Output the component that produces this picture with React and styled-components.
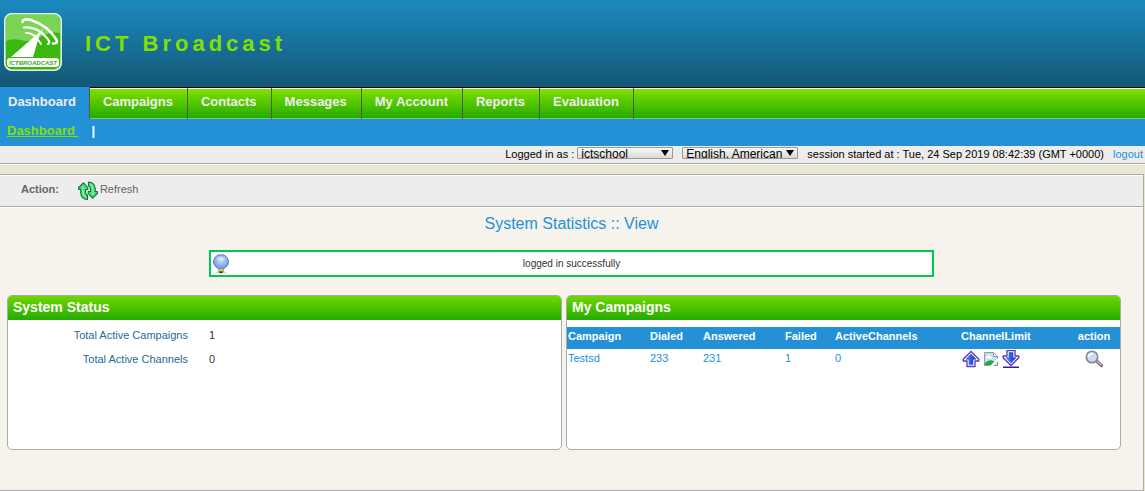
import { useState } from 'react';
import styled, { createGlobalStyle } from 'styled-components';

const GlobalStyle = createGlobalStyle`
  * {
    box-sizing: border-box;
  }

  html, body, #root {
    height: 100%;
  }

  body {
    margin: 0;
    background: #e8e8d0;
    color: #000;
    font-family: 'Liberation Sans', Arial, sans-serif;
    font-size: 11px;
  }
`;

const Page = styled.div`
  display: flex;
  flex-direction: column;
  min-height: 100%;
`;

const Header = styled.header`
  display: flex;
  align-items: center;
  gap: 22px;
  height: 87px;
  padding: 0 0 4px 3px;
  background: linear-gradient(#1c8abf, #145775);

  h1 {
    margin: 0;
    padding-top: 4px;
    color: #80e000;
    font-size: 22px;
    letter-spacing: 4px;
  }
`;

const Nav = styled.nav`
  display: flex;
  height: 32px;
  border-top: 1px solid #000;
  border-bottom: 1px solid #7fcf66;
  background: linear-gradient(#fff 1px, #80e000 1px, #24ab00);
`;

const Tab = styled.a`
  margin: ${({ $active }) => ($active ? '-1px 0' : '0 0 -1px')};
  padding: ${({ $active }) => ($active ? '7px 13px 0 8px' : '6px 14px 0 13px')};
  border-right: 1px solid #555;
  background: ${({ $active }) => ($active ? '#2491d6' : 'none')};
  color: #eee;
  font-size: 13px;
  font-weight: bold;
  line-height: 15px;
  text-decoration: none;
`;

const SubNav = styled.div`
  display: flex;
  gap: 13px;
  height: 27px;
  padding: 4px 7px;
  background: #2491d6;
  color: #fff;
  font-size: 13px;
  font-weight: bold;
  line-height: 15px;

  a {
    color: #80e000;
    white-space: pre;
  }
`;

const SessionBar = styled.div`
  display: flex;
  justify-content: flex-end;
  gap: 9px;
  height: 18px;
  padding: 1px 2px 0 0;
  border-bottom: 1px solid #aaa;
  background: #ededed;
  box-shadow: 0 1px #fff;
  line-height: 14px;

  label {
    display: flex;
    gap: 3px;
  }
`;

const SelectBox = styled.span`
  display: grid;
  width: ${({ $width }) => $width}px;
  height: 12px;

  select,
  &::after {
    grid-area: 1 / 1;
  }

  select {
    appearance: none;
    width: 100%;
    height: 12px;
    margin: 0;
    padding: 0 3px;
    border: 1px solid #999;
    border-radius: 1px;
    background: linear-gradient(#f8f8f8, #dadada);
    color: #000;
    font-family: inherit;
    font-size: 12px;
    line-height: 12px;
  }

  &::after {
    content: '';
    justify-self: end;
    margin: 3px 4px 0 0;
    border: solid transparent;
    border-width: 6px 4px 0;
    border-top-color: #000;
    height: 0;
    pointer-events: none;
    z-index: 1;
  }
`;

const Logout = styled.a`
  color: #2491d6;
  text-decoration: none;
`;

const Main = styled.main`
  flex: 1;
  margin: 10px 1px 0 0;
  border: solid #aaa;
  border-width: 1px 1px 1px 0;
  background: #f6f3ec;
`;

const ActionBar = styled.div`
  display: flex;
  align-items: center;
  gap: 19px;
  height: 32px;
  padding-left: 21px;
  border-top: 1px solid #fff;
  border-bottom: 1px solid #aaa;
  background: #ededed;
  color: #666;
  line-height: 13px;

  strong {
    padding-bottom: 4px;
  }
`;

const ActionButton = styled.button`
  display: flex;
  align-items: center;
  gap: 2px;
  padding: 0;
  border: 0;
  background: none;
  color: #666;
  font: inherit;
  cursor: pointer;

  span {
    padding-bottom: 4px;
  }
`;

const PageTitle = styled.h2`
  margin: 0;
  padding-top: 6px;
  border-top: 1px solid #fff;
  color: #2491d6;
  font-size: 16px;
  font-weight: normal;
  line-height: 20px;
  text-align: center;
`;

const Notice = styled.p`
  display: grid;
  grid-template-columns: 18px 1fr 18px;
  align-items: center;
  width: 725px;
  max-width: 100%;
  height: 27px;
  margin: 16px auto 18px;
  border: 2px solid #00c853;
  background: #fff;
  color: #333;
  font-size: 10px;
  text-align: center;
`;

const Panels = styled.div`
  display: grid;
  grid-template-columns: 1fr 1fr;
  gap: 4px;
  padding: 0 22px 40px 7px;
`;

const StyledPanel = styled.section`
  min-height: 155px;
  overflow: hidden;
  border: 1px solid #aaa;
  border-radius: 5px;
  background: #fff;

  h3 {
    height: 24px;
    margin: 0 0 7px;
    padding: 3px 5px;
    background: linear-gradient(#70d800, #24ab00);
    color: #fff;
    font-size: 14px;
    line-height: 16px;
  }
`;

const StatusList = styled.dl`
  display: grid;
  grid-template-columns: 180px 1fr;
  column-gap: 21px;
  margin: 0;
  line-height: 16px;
  grid-auto-rows: 24px;

  dt {
    color: #276a98;
    text-align: right;
  }

  dd {
    margin: 0;
    color: #333;
  }
`;

const CampaignTable = styled.table`
  width: 100%;
  border-collapse: collapse;
  table-layout: fixed;
  color: #2491d6;

  th, td {
    height: 22px;
    padding: 0 1px;
    line-height: 18px;
    text-align: left;
    vertical-align: top;
  }

  th {
    background: #2491d6;
    color: #fff;
  }

  th:last-child, td:last-child {
    text-align: center;
  }
`;

const Column = styled.col`
  width: ${({ $width }) => ($width ? `${$width}px` : 'auto')};
`;

const IconRow = styled.span`
  display: flex;
  align-items: center;
  gap: 1px;
  padding-top: 1px;
  justify-content: ${({ $center }) => ($center ? 'center' : 'flex-start')};
`;

const IconButton = styled.button`
  display: flex;
  padding: 0;
  border: 0;
  background: none;
  cursor: pointer;
`;

const Logo = () => (
  <svg width='60' height='60' viewBox='0 0 60 60' role='img' aria-label='ICTBroadcast'>
    <rect x='1.8' y='1.8' width='56.4' height='56.4' rx='7' fill='#3ab80f' stroke='#e4f5ee' strokeWidth='1.6' />
    <path d='M3 9Q3 3 9 3H51Q57 3 57 9V21Q48 19 39 24Q28 31 17 28Q9 26 3 29Z' fill='#7bd455' />
    <path d='M8 45L32 24L40 17L36 25L30 45Z' fill='#fff' />
    <g fill='none' stroke='#fff' strokeLinecap='round'>
      <path d='M19.500 10Q20 6 28 8Q45 14 53 27Q56 32 50 31.500' strokeWidth='2.6' />
      <path d='M21 15.500Q34 14 44 26Q48 31 45 32' strokeWidth='2.1' />
      <path d='M23 21Q31 20 38 32' strokeWidth='1.9' />
    </g>
    <rect x='4' y='46' width='52' height='9' rx='3' fill='#fff' />
    <text
      x='30'
      y='53'
      textAnchor='middle'
      fill='#36a90f'
      fontFamily="'Liberation Sans', sans-serif"
      fontSize='6'
      fontWeight='bold'
      fontStyle='italic'
    >
      ICTBROADCAST
    </text>
  </svg>
);

const RefreshIcon = () => (
  <svg width='20' height='20' viewBox='0 0 20 20' aria-hidden='true'>
    <g fill='#3fe070' stroke='#1a6b45' strokeWidth='1.100' strokeLinejoin='round'>
      <path d='M5.500 1.800L.6 6.500V8.500H2.800V12.500Q3.200 18.500 9.500 18.500V14Q7.600 13.800 7.600 11.500V8.500H9.800V6.500Z' />
      <path d='M14.500 17.200L19.400 12.500V10.500H17.200V7.500Q16.500 1 10.500 1V5Q12.400 5.500 12.400 8V10.500H10.200V12.500Z' />
    </g>
    <path d='M5 5V12Q5.500 15 7.500 16M15 14V8Q14.500 4.500 12.500 3' fill='none' stroke='#8df5a5' strokeWidth='1.200' />
  </svg>
);

const BulbIcon = () => (
  <svg width='18' height='20' viewBox='0 0 18 20' aria-hidden='true'>
    <defs>
      <radialGradient id='bulb' cx='.5' cy='.35' r='.6'>
        <stop offset='0' stopColor='#d2e4fb' />
        <stop offset='1' stopColor='#6b9be8' />
      </radialGradient>
    </defs>
    <ellipse cx='10' cy='18.6' rx='5.5' ry='1' fill='#d5d5d5' />
    <path d='M10 .9A6.8 6.8 0 0 1 14 13.5L12.6 15H7.4L6 13.5A6.8 6.8 0 0 1 10 .9Z' fill='url(#bulb)' stroke='#6f70a5' />
    <path d='M6 6Q10 1 14 6Q10 4.500 6 6Z' fill='#e8f1fd' />
    <path d='M7.500 14.500H12.500V17.500H7.500Z' fill='#c8c97b' stroke='#8e8e5c' strokeWidth='.6' />
    <path d='M8 18.200H12' stroke='#333' strokeWidth='1.400' />
  </svg>
);

const ArrowIcon = ({ down }) => (
  <svg width='20' height='18' viewBox='0 0 20 18' aria-hidden='true'>
    <defs>
      <linearGradient id='arrow'>
        <stop offset='0' stopColor='#4d9dff' />
        <stop offset='1' stopColor='#1720c8' />
      </linearGradient>
    </defs>
    <g transform={down ? 'matrix(1 0 0 -1 0 17)' : undefined} strokeLinejoin='round'>
      <path d='M10 1.500L2.200 9.300V11H6V16.500H14V11H17.800V9.300Z' fill='#fff' stroke='#5a35b0' strokeWidth='1.300' />
      <path d='M10 4L5 9.300H8V14.500H12V9.300H15Z' fill='url(#arrow)' stroke='#2430c8' strokeWidth='.5' />
    </g>
    {down && <path d='M2 17.200H18' stroke='#3b1aa0' strokeWidth='1.600' />}
  </svg>
);

const BrokenImageIcon = () => (
  <svg width='18' height='18' viewBox='0 0 18 18' aria-hidden='true'>
    <path d='M2.500 2.500H11.500L15.500 6.500V15.500H2.500Z' fill='#c9dcf6' stroke='#999' />
    <path d='M11.500 2.500V6.500H15.500Z' fill='#fff' stroke='#999' />
    <path d='M4 8Q4 6 6 6Q8 4 9 7Q11 8 9 8.500H4Z' fill='#fff' />
    <path d='M3 15V13Q8 8 13 12L11 15Z' fill='#1fac3c' />
    <path d='M8 16L16 8V11L11 16Z' fill='#fff' />
  </svg>
);

const MagnifierIcon = () => (
  <svg width='20' height='18' viewBox='0 0 20 18' aria-hidden='true'>
    <path d='M12.500 11L17.500 15.500' stroke='#777' strokeWidth='3.400' strokeLinecap='round' />
    <path d='M13 11.200L17.300 15' stroke='#bbb' strokeWidth='1.200' strokeLinecap='round' />
    <circle cx='8' cy='7' r='5.700' fill='#c9ddf8' stroke='#8a8a8a' strokeWidth='1.700' />
    <path d='M4.500 7Q5 3.500 9 3.500' fill='none' stroke='#fff' strokeWidth='1.400' />
  </svg>
);

const Panel = ({ title, children }) => (
  <StyledPanel>
    <h3>{title}</h3>
    {children}
  </StyledPanel>
);

const Select = ({ id, width, options, ...rest }) => {
  const [value, setValue] = useState(options[0]);

  return (
    <SelectBox $width={width}>
      <select id={id} value={value} onChange={(e) => setValue(e.target.value)} {...rest}>
        {options.map((option) => (
          <option key={option}>{option}</option>
        ))}
      </select>
    </SelectBox>
  );
};

const tabs = ['Dashboard', 'Campaigns', 'Contacts', 'Messages', 'My Account', 'Reports', 'Evaluation'];

const status = [
  { label: 'Total Active Campaigns', value: 1 },
  { label: 'Total Active Channels', value: 0 },
];

const columns = [
  { name: 'Campaign', width: 82 },
  { name: 'Dialed', width: 53 },
  { name: 'Answered', width: 82 },
  { name: 'Failed', width: 50 },
  { name: 'ActiveChannels', width: 126 },
  { name: 'ChannelLimit' },
  { name: 'action', width: 52 },
];

const campaigns = [{ name: 'Testsd', dialed: 233, answered: 231, failed: 1, active: 0 }];

const App = () => (
  <Page>
    <GlobalStyle />
    <Header>
      <Logo />
      <h1>ICT Broadcast</h1>
    </Header>
    <Nav>
      {tabs.map((tab, i) => (
        <Tab key={tab} href='#' $active={i === 0}>{tab}</Tab>
      ))}
    </Nav>
    <SubNav>
      <a href='#'>{'Dashboard '}</a>
      <span>|</span>
    </SubNav>
    <SessionBar>
      <label htmlFor='account'>
        Logged in as :
        <Select id='account' width={96} options={['ictschool']} />
      </label>
      <Select id='language' width={116} options={['English, American']} aria-label='Language' />
      <span>session started at : Tue, 24 Sep 2019 08:42:39 (GMT +0000)</span>
      <Logout href='#'>logout</Logout>
    </SessionBar>
    <Main>
      <ActionBar>
        <strong>Action:</strong>
        <ActionButton type='button'>
          <RefreshIcon />
          <span>Refresh</span>
        </ActionButton>
      </ActionBar>
      <PageTitle>System Statistics :: View</PageTitle>
      <Notice role='status'>
        <BulbIcon />
        <span>logged in successfully</span>
      </Notice>
      <Panels>
        <Panel title='System Status'>
          <StatusList>
            {status.map(({ label, value }) => [
              <dt key={label}>{label}</dt>,
              <dd key={`${label}-value`}>{value}</dd>,
            ])}
          </StatusList>
        </Panel>
        <Panel title='My Campaigns'>
          <CampaignTable>
            <colgroup>
              {columns.map(({ name, width }) => (
                <Column key={name} $width={width} />
              ))}
            </colgroup>
            <thead>
              <tr>
                {columns.map(({ name }) => (
                  <th key={name} scope='col'>{name}</th>
                ))}
              </tr>
            </thead>
            <tbody>
              {campaigns.map((campaign) => (
                <tr key={campaign.name}>
                  <td>{campaign.name}</td>
                  <td>{campaign.dialed}</td>
                  <td>{campaign.answered}</td>
                  <td>{campaign.failed}</td>
                  <td>{campaign.active}</td>
                  <td>
                    <IconRow>
                      <IconButton type='button' aria-label='Raise channel limit'><ArrowIcon /></IconButton>
                      <BrokenImageIcon />
                      <IconButton type='button' aria-label='Lower channel limit'><ArrowIcon down /></IconButton>
                    </IconRow>
                  </td>
                  <td>
                    <IconRow $center>
                      <IconButton type='button' aria-label='View campaign'><MagnifierIcon /></IconButton>
                    </IconRow>
                  </td>
                </tr>
              ))}
            </tbody>
          </CampaignTable>
        </Panel>
      </Panels>
    </Main>
  </Page>
);

export default App;
